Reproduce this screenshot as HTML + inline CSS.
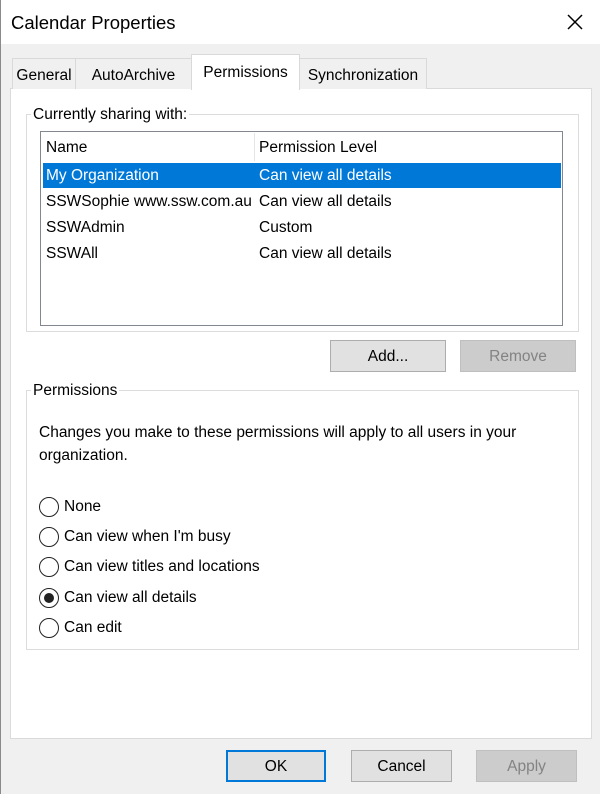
<!DOCTYPE html>
<html><head><style>
*{margin:0;padding:0;box-sizing:border-box}
body{width:600px;height:794px;background:#f0f0f0;font-family:"Liberation Sans",sans-serif;font-size:15.5px;line-height:1.4;color:#000;position:relative;overflow:hidden;border-left:1px solid #8a8a8a}
.a{position:absolute;white-space:nowrap}
.title{left:0;top:0;width:600px;height:44px;background:#fff}
.tab{position:absolute;top:58px;height:31px;border:1px solid #d9d9d9;border-bottom:none;background:#f0f0f0;padding-top:6px;text-align:center;line-height:1.4}
.btn{position:absolute;height:32px;border:1px solid #adadad;background:#e1e1e1;text-align:center;line-height:32px}
.dis{background:#cccccc;border-color:#bfbfbf;color:#838383}
.grp{position:absolute;border:1px solid #dcdcdc}
.lbl{position:absolute;background:#fff;padding:0 2px}
.radio{position:absolute;left:38px;width:20px;height:20px;border:1.5px solid #222;border-radius:50%;background:#fff}
.rt{position:absolute;left:63px}
</style></head><body>
<div class="a title"></div>
<div class="a" style="left:10px;top:10px;font-size:18.5px">Calendar Properties</div>
<svg class="a" style="left:566px;top:14px" width="16" height="16"><path d="M1 1L15 15M15 1L1 15" stroke="#000" stroke-width="1.5"/></svg>
<div class="a" style="left:9px;top:88px;width:582px;height:651px;background:#fff;border:1px solid #dadada"></div>
<div class="tab" style="left:11px;width:64px">General</div>
<div class="tab" style="left:74px;width:117px">AutoArchive</div>
<div class="tab" style="left:190px;top:54px;height:36px;width:109px;background:#fff;padding-top:7px;z-index:2">Permissions</div>
<div class="tab" style="left:298px;width:128px">Synchronization</div>

<div class="grp" style="left:25px;top:114px;width:553px;height:218px"></div>
<div class="lbl" style="left:30px;top:104px">Currently sharing with:</div>
<div class="a" style="left:39px;top:131px;width:523px;height:195px;border:1px solid #828790;background:#fff"></div>
<div class="a" style="left:253px;top:133px;width:1px;height:28px;background:#e5e5e5"></div>
<div class="a" style="left:45px;top:137px">Name</div>
<div class="a" style="left:258px;top:137px">Permission Level</div>
<div class="a" style="left:42px;top:163px;width:518px;height:25px;background:#0078d7"></div>
<div class="a" style="left:45px;top:165px;color:#fff">My Organization</div>
<div class="a" style="left:258px;top:165px;color:#fff">Can view all details</div>
<div class="a" style="left:45px;top:191px;width:208px;overflow:hidden">SSWSophie www.ssw.com.au</div>
<div class="a" style="left:258px;top:191px">Can view all details</div>
<div class="a" style="left:45px;top:217px">SSWAdmin</div>
<div class="a" style="left:258px;top:217px">Custom</div>
<div class="a" style="left:45px;top:243px">SSWAll</div>
<div class="a" style="left:258px;top:243px">Can view all details</div>

<div class="btn" style="left:329px;top:340px;width:116px">Add...</div>
<div class="btn dis" style="left:459px;top:340px;width:116px">Remove</div>

<div class="grp" style="left:25px;top:390px;width:553px;height:260px"></div>
<div class="lbl" style="left:30px;top:380px">Permissions</div>
<div class="a" style="left:38px;top:422px">Changes you make to these permissions will apply to all users in your</div>
<div class="a" style="left:38px;top:445px">organization.</div>
<div class="radio" style="top:497px"></div><div class="a rt" style="top:496px">None</div>
<div class="radio" style="top:527px"></div><div class="a rt" style="top:526px">Can view when I'm busy</div>
<div class="radio" style="top:557px"></div><div class="a rt" style="top:556px">Can view titles and locations</div>
<div class="radio" style="top:588px"><div style="position:absolute;left:3.5px;top:3.5px;width:10px;height:10px;border-radius:50%;background:#222"></div></div><div class="a rt" style="top:587px">Can view all details</div>
<div class="radio" style="top:618px"></div><div class="a rt" style="top:617px">Can edit</div>

<div class="btn" style="left:225px;top:750px;width:100px;border:1px solid #0078d7;box-shadow:inset 0 0 0 1px #0078d7">OK</div>
<div class="btn" style="left:350px;top:750px;width:101px">Cancel</div>
<div class="btn dis" style="left:475px;top:750px;width:101px">Apply</div>
</body></html>
